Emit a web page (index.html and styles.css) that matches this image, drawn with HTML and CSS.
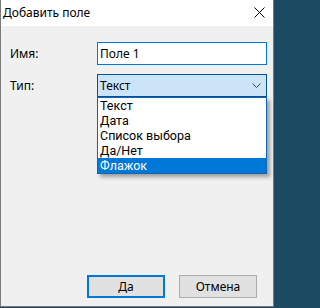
FILE: index.html
```html
<!DOCTYPE html>
<html lang="ru">
<head>
<meta charset="utf-8">
<title>Добавить поле</title>
<link rel="stylesheet" href="styles.css">
</head>
<body>
<div class="window">
  <div class="titlebar">
    <span class="title">Добавить поле</span>
    <span class="close">
      <svg width="11" height="11" viewBox="0 0 11 11"><path d="M0.5 0.5 L10.5 10.5 M10.5 0.5 L0.5 10.5" stroke="#000" stroke-width="1" fill="none"/></svg>
    </span>
  </div>
  <div class="client">
    <div class="form">
      <div class="row">
        <span class="label">Имя:</span>
        <div class="textbox">Поле 1</div>
      </div>
      <div class="row row-combo">
        <span class="label">Тип:</span>
        <div class="combo-wrap">
          <div class="combo">
            <span>Текст</span>
            <svg class="chev" width="9" height="5" viewBox="0 0 9 5"><path d="M0.5 0.5 L4.5 4.5 L8.5 0.5" stroke="#444" stroke-width="1" fill="none"/></svg>
          </div>
          <ul class="dropdown">
            <li>Текст</li>
            <li>Дата</li>
            <li>Список выбора</li>
            <li>Да/Нет</li>
            <li class="selected">Флажок</li>
          </ul>
        </div>
      </div>
    </div>
    <div class="buttons">
      <button class="btn btn-default">Да</button>
      <button class="btn">Отмена</button>
    </div>
  </div>
</div>
</body>
</html>
```

FILE: styles.css
```css
html, body {
  margin: 0;
  padding: 0;
}
body {
  background: #1d4a63;
  font-family: "Noto Sans", "Segoe UI", sans-serif;
  font-size: 12px;
  color: #000;
  width: 275px;
  height: 308px;
  overflow: hidden;
}
.window {
  width: 274px;
  height: 307px;
  box-sizing: border-box;
  border: 1px solid #7a7a7a;
  border-top: none;
  display: flex;
  flex-direction: column;
  background: #f0f0f0;
}
.titlebar {
  height: 26px;
  background: #fff;
  display: flex;
  align-items: center;
  justify-content: space-between;
  padding-left: 2px;
  padding-right: 8px;
}
.title {
  line-height: 16px;
}
.close {
  display: flex;
  margin-top: -1px;
}
.client {
  flex: 1;
  display: flex;
  flex-direction: column;
  padding: 16px 0 8px 9px;
}
.form {
  display: flex;
  flex-direction: column;
  gap: 9px;
}
.row {
  display: grid;
  grid-template-columns: 87px 170px;
  align-items: center;
}
.label {
  line-height: 16px;
}
.textbox {
  height: 23px;
  box-sizing: border-box;
  border: 1px solid #0078d7;
  background: #fff;
  padding-left: 2px;
  display: flex;
  align-items: center;
}
.combo-wrap {
  position: relative;
}
.combo {
  height: 23px;
  box-sizing: border-box;
  border: 1px solid #005499;
  background: #cce4f7;
  padding-left: 2px;
  padding-right: 5px;
  display: flex;
  align-items: center;
  justify-content: space-between;
}
.chev {
  display: block;
}
.dropdown {
  position: absolute;
  left: 0;
  top: 23px;
  width: 170px;
  box-sizing: border-box;
  margin: 0;
  padding: 0;
  list-style: none;
  background: #fff;
  border: 1px solid #1066b0;
  box-shadow: 3px 3px 4px rgba(0, 0, 0, 0.35);
  font-family: Roboto, "Noto Sans", sans-serif;
  font-size: 12.5px;
}
.dropdown li {
  height: 15px;
  line-height: 15px;
  padding-left: 2px;
}
.dropdown li.selected {
  background: #0078d7;
  color: #fff;
}
.buttons {
  margin-top: auto;
  display: flex;
  justify-content: flex-end;
  gap: 14px;
  padding-right: 16px;
}
.btn {
  width: 78px;
  height: 23px;
  box-sizing: border-box;
  border: 1px solid #adadad;
  background: #e1e1e1;
  font-family: inherit;
  font-size: 12px;
  color: #000;
  padding: 0;
  margin: 0;
}
.btn-default {
  border: 2px solid #0078d7;
}
```
